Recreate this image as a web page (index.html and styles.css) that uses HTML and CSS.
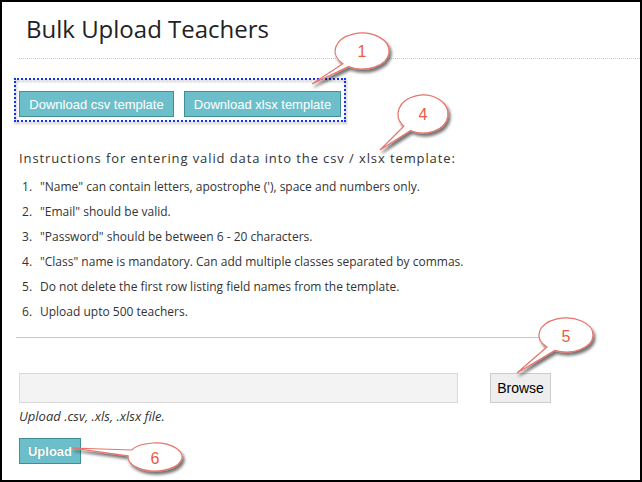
FILE: index.html
```html
<!DOCTYPE html>
<html>
<head>
<meta charset="utf-8">
<link rel="stylesheet" href="styles.css">
</head>
<body>
<div class="frame">
  <div class="page">
    <header class="page-header"><h1 class="title">Bulk Upload Teachers</h1></header>
    <div class="tpl-box">
      <button class="btn btn-info btn-csv">Download csv template</button>
      <button class="btn btn-info btn-xlsx">Download xlsx template</button>
    </div>
    <h4 class="instr-title">Instructions for entering valid data into the csv / xlsx template:</h4>
    <ol class="rules">
      <li>"Name" can contain letters, apostrophe ('), space and numbers only.</li>
      <li>"Email" should be valid.</li>
      <li>"Password" should be between 6 - 20 characters.</li>
      <li>"Class" name is mandatory. Can add multiple classes separated by commas.</li>
      <li>Do not delete the first row listing field names from the template.</li>
      <li>Upload upto 500 teachers.</li>
    </ol>
    <hr class="divider">
    <div class="file-row">
      <div class="file-field"></div>
      <button class="browse">Browse</button>
    </div>
    <p class="help">Upload .csv, .xls, .xlsx file.</p>
    <button class="btn btn-info btn-upload">Upload</button>
  </div>
  <svg class="callouts" width="642" height="482" viewBox="0 0 642 482">
    <defs>
      <filter id="sh" x="-30%" y="-30%" width="160%" height="160%">
        <feDropShadow dx="2" dy="3" stdDeviation="1.5" flood-color="#000" flood-opacity="0.55"/>
      </filter>
    </defs>
    <g class="bubble" filter="url(#sh)">
      <path d="M348.5 66.6 L312 84 L342.9 63.7 A27 18 0 1 1 348.5 66.6 Z"/>
      <path d="M410.5 130.5 L380 150 L403.8 126.2 A25 19 0 1 1 410.5 130.5 Z"/>
      <path d="M554.6 350.4 L517 373 L546.9 347 A27 17 0 1 1 554.6 350.4 Z"/>
      <path d="M128.1 455.8 L72 448 L131.6 450 A27 14 0 1 1 128.1 455.8 Z"/>
    </g>
    <g class="nums">
      <text x="362" y="57">1</text>
      <text x="423" y="120">4</text>
      <text x="566" y="342">5</text>
      <text x="155" y="464">6</text>
    </g>
  </svg>
</div>
</body>
</html>
```

FILE: styles.css
```css
html, body {
  margin: 0;
  padding: 0;
  background: #fff;
}

.frame {
  position: relative;
  width: 642px;
  height: 482px;
  box-sizing: border-box;
  border: 2px solid #000;
  overflow: hidden;
  font-family: "Open Sans", "Liberation Sans", sans-serif;
  color: #333;
}

.page {
  padding: 10px 0 0 17px;
}

.page-header {
  border-bottom: 1px dotted #c8c8c8;
  padding-bottom: 13px;
}

.title {
  margin: 0 0 0 7px;
  font-size: 24px;
  line-height: 33px;
  font-weight: 400;
  color: #222;
}

.tpl-box {
  position: relative;
  display: inline-flex;
  gap: 10px;
  margin: 19px 0 0 -5px;
  padding: 13px 5px 5px 5px;
}

.tpl-box::before {
  content: "";
  position: absolute;
  inset: 0;
  border: 2px dotted #1530f0;
  filter: drop-shadow(1px 2px 1px rgba(0, 0, 0, 0.35));
  pointer-events: none;
}

.btn {
  font-family: "Liberation Sans", Arial, sans-serif;
  font-size: 13px;
  line-height: 15px;
  color: #fff;
  background: #6cbfca;
  border: 1px solid #3f8e98;
  border-radius: 0;
  padding: 5px 0;
  height: 26px;
  box-sizing: border-box;
  margin: 0;
  text-align: center;
}

.btn-csv { width: 155px; }
.btn-xlsx { width: 157px; }

.instr-title {
  margin: 27px 0 0 0;
  font-size: 13px;
  line-height: 18px;
  font-weight: 400;
  letter-spacing: 0.9px;
  color: #333;
}

.rules {
  list-style: none;
  counter-reset: rule;
  margin: 7px 0 0 0;
  padding: 0;
  font-size: 12px;
  line-height: 25px;
  color: #333;
}

.rules li {
  counter-increment: rule;
}

.rules li::before {
  content: counter(rule) ".";
  display: inline-block;
  width: 18px;
  padding-left: 3px;
}

.divider {
  margin: 13px 0 0 -3px;
  width: 559px;
  border: 0;
  border-top: 1px solid #c8c8c8;
  height: 0;
}

.file-row {
  display: flex;
  gap: 32px;
  margin-top: 35px;
}

.file-field {
  width: 439px;
  height: 30px;
  box-sizing: border-box;
  background: #f3f3f3;
  border: 1px solid #d9d9d9;
}

.browse {
  width: 61px;
  height: 30px;
  box-sizing: border-box;
  margin: 0;
  padding: 0;
  background: #eeeeee;
  border: 1px solid #cccccc;
  border-radius: 0;
  font-family: "Liberation Sans", Arial, sans-serif;
  font-size: 14px;
  color: #000;
}

.help {
  margin: 4px 0 0 0;
  font-size: 13px;
  line-height: 18px;
  font-style: italic;
  color: #333;
}

.btn-upload {
  display: block;
  margin-top: 13px;
  width: 62px;
  font-weight: 700;
  text-shadow: 0 0 1px rgba(0, 0, 0, 0.3);
}

.callouts {
  position: absolute;
  left: -2px;
  top: -2px;
  pointer-events: none;
}

.bubble path {
  fill: #fff;
  stroke: #e8736a;
  stroke-width: 1.2;
}

.nums text {
  font-family: "Liberation Sans", Arial, sans-serif;
  font-size: 16px;
  fill: #ea5a45;
  text-anchor: middle;
}
```
